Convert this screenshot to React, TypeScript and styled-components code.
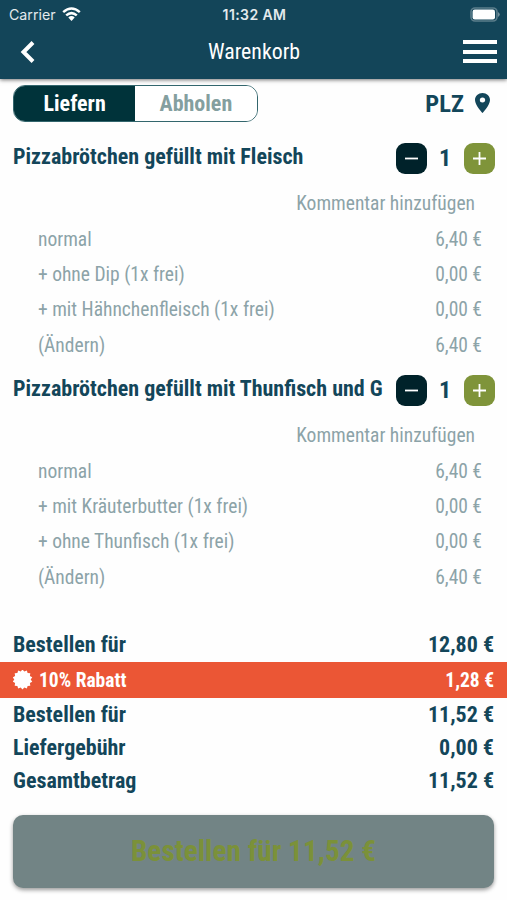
import React from 'react';
import styled, { createGlobalStyle } from 'styled-components';

const Global = createGlobalStyle`
  * { box-sizing: border-box; }
  body { margin: 0; background: #fff; }
`;

const Screen = styled.div`
  width: 507px;
  height: 900px;
  overflow: hidden;
  display: flex;
  flex-direction: column;
  background: #fefefe;
  color: #13465a;
  font-family: 'Roboto Condensed', Roboto, sans-serif;
  font-stretch: 75%;
  white-space: nowrap;
`;

const Header = styled.header`
  flex: none;
  height: 79px;
  background: #134559;
  color: #fff;
  box-shadow: 0 1px 4px rgba(0, 0, 0, 0.55);
`;

const StatusBar = styled.div`
  height: 27px;
  display: grid;
  grid-template-columns: 1fr auto 1fr;
  align-items: center;
  padding: 0 7px 0 9px;
  font: 400 14px/27px Inter, sans-serif;
  font-stretch: 100%;
  color: #e4eaed;
`;

const Carrier = styled.div`
  display: flex;
  align-items: center;
  gap: 6px;
  font-size: 14.2px;
`;

const Clock = styled.div`
  padding-top: 1px;
  font-weight: 600;
  font-size: 14px;
  letter-spacing: 0.4px;
`;

const BatterySlot = styled.div`
  display: flex;
  justify-content: flex-end;
`;

const NavBar = styled.div`
  height: 50px;
  display: grid;
  grid-template-columns: 1fr auto 1fr;
  align-items: center;
  padding: 0 10px 0 20px;
`;

const Title = styled.h1`
  margin: 0 9px 2px 0;
  font-size: 21.8px;
  font-weight: 400;
`;

const MenuButton = styled.div`
  justify-self: end;
  width: 34px;
  height: 23px;
  margin-bottom: 1px;
  display: flex;
  flex-direction: column;
  justify-content: space-between;
`;

const MenuLine = styled.span`
  height: 4px;
  background: #fff;
`;

const Toolbar = styled.div`
  flex: none;
  height: 60px;
  padding: 6px 17px 0 13px;
  display: flex;
  justify-content: space-between;
  align-items: flex-start;
`;

const Toggle = styled.div`
  display: flex;
  width: 244.5px;
  height: 37px;
  border: 1px solid #33666d;
  border-radius: 12px;
  overflow: hidden;
`;

const ToggleOption = styled.div<{ $active?: boolean }>`
  flex: 1;
  text-align: center;
  font-size: 22px;
  font-weight: 700;
  line-height: 35px;
  background: ${(p) => (p.$active ? '#00333a' : '#fff')};
  color: ${(p) => (p.$active ? '#fff' : '#849f9f')};
`;

const PostalCode = styled.div`
  display: flex;
  align-items: center;
  gap: 11px;
  height: 36px;
  font-size: 24.5px;
  font-weight: 700;
`;

const Item = styled.section`
  flex: none;
  height: 232px;
`;

const ItemHead = styled.div`
  height: 47px;
  padding: 4px 12px 0 13px;
  display: flex;
  align-items: flex-start;
`;

const ItemName = styled.div`
  width: 371px;
  margin-right: 12px;
  overflow: hidden;
  font-size: 22px;
  font-weight: 700;
  line-height: 27px;
`;

const Stepper = styled.div`
  flex: 1;
  height: 31px;
  display: flex;
  align-items: center;
  justify-content: space-between;
  font-size: 24px;
  font-weight: 700;
`;

const StepCount = styled.span`
  line-height: 31px;
  margin-right: 1px;
`;

const StepButton = styled.div<{ $plus?: boolean }>`
  width: 31px;
  height: 31px;
  border-radius: 9px;
  display: grid;
  place-items: center;
  background: ${(p) => (p.$plus ? '#7f943a' : '#00222a')};
`;

const DetailRow = styled.div<{ $comment?: boolean }>`
  height: 35.4px;
  padding: 0 ${(p) => (p.$comment ? 32 : 25)}px 0 38px;
  display: flex;
  align-items: center;
  justify-content: ${(p) => (p.$comment ? 'flex-end' : 'space-between')};
  font-size: 19.5px;
  color: #8ca3a8;
`;

const Totals = styled.section`
  flex: none;
  padding-top: 25px;
`;

const TotalRow = styled.div`
  height: 33px;
  padding: 0 13px;
  display: flex;
  align-items: center;
  justify-content: space-between;
  font-size: 22px;
  font-weight: 700;
`;

const DiscountRow = styled(TotalRow)`
  height: 36px;
  margin-top: 1px;
  background: #eb5635;
  color: #fff;
  font-size: 19.5px;
`;

const DiscountLabel = styled.div`
  display: flex;
  align-items: center;
  gap: 6px;
`;

const OrderButton = styled.div`
  flex: none;
  width: 481px;
  height: 73px;
  margin: 18px 13px 0;
  border-radius: 10px;
  background: #728485;
  box-shadow: 0 2px 4px rgba(0, 0, 0, 0.4);
  color: #7b9139;
  text-align: center;
  font-size: 29.3px;
  font-weight: 700;
  line-height: 72px;
`;

const burst = Array.from({ length: 28 }, (_, i) => {
  const r = i % 2 ? 8.2 : 10;
  const a = (i * Math.PI) / 14;
  return `${(10 + r * Math.sin(a)).toFixed(2)},${(10 - r * Math.cos(a)).toFixed(2)}`;
}).join(' ');

const items = [
  {
    name: 'Pizzabrötchen gefüllt mit Fleisch',
    rows: [
      ['normal', '6,40 €'],
      ['+ ohne Dip (1x frei)', '0,00 €'],
      ['+ mit Hähnchenfleisch (1x frei)', '0,00 €'],
      ['(Ändern)', '6,40 €'],
    ],
  },
  {
    name: 'Pizzabrötchen gefüllt mit Thunfisch und G',
    rows: [
      ['normal', '6,40 €'],
      ['+ mit Kräuterbutter (1x frei)', '0,00 €'],
      ['+ ohne Thunfisch (1x frei)', '0,00 €'],
      ['(Ändern)', '6,40 €'],
    ],
  },
];

const totals = [
  ['Bestellen für', '11,52 €'],
  ['Liefergebühr', '0,00 €'],
  ['Gesamtbetrag', '11,52 €'],
];

export default function App() {
  return (
    <Screen>
      <Global />
      <Header>
        <StatusBar>
          <Carrier>
            <span>Carrier</span>
            <svg width="19" height="14" viewBox="0 0 19 14" fill="none" stroke="#fff" strokeWidth="2.5">
              <path d="M1.2 5.1Q9.5-2.2 17.8 5.1M4.2 8.4Q9.5 3.8 14.8 8.4" />
              <path d="M6.3 10.5Q9.5 7.7 12.7 10.5L9.5 14Z" fill="#fff" stroke="none" />
            </svg>
          </Carrier>
          <Clock>11:32 AM</Clock>
          <BatterySlot>
            <svg width="30" height="15" viewBox="0 0 30 15">
              <rect x="1" y="1" width="26" height="13" rx="4" fill="none" stroke="#5b7d8b" strokeWidth="1.6" />
              <rect x="2.6" y="2.6" width="22.4" height="9.8" rx="2.2" fill="#fff" />
              <path d="M28 5Q31.6 7.5 28 10Z" fill="#718f9b" />
            </svg>
          </BatterySlot>
        </StatusBar>
        <NavBar>
          <svg width="15" height="22" viewBox="0 0 15 22" fill="none" stroke="#fff" strokeWidth="4">
            <path d="M13 1.5L3.5 11L13 20.5" />
          </svg>
          <Title>Warenkorb</Title>
          <MenuButton>
            <MenuLine />
            <MenuLine />
            <MenuLine />
          </MenuButton>
        </NavBar>
      </Header>
      <Toolbar>
        <Toggle>
          <ToggleOption $active>Liefern</ToggleOption>
          <ToggleOption>Abholen</ToggleOption>
        </Toggle>
        <PostalCode>
          PLZ
          <svg width="15" height="20" viewBox="5 2 14 20" preserveAspectRatio="none" fill="#13465a">
            <path d="M12 2C8.13 2 5 5.13 5 9c0 5.25 7 13 7 13s7-7.75 7-13c0-3.87-3.13-7-7-7zm0 9.5a2.5 2.5 0 1 1 0-5 2.5 2.5 0 0 1 0 5z" />
          </svg>
        </PostalCode>
      </Toolbar>
      {items.map((item) => (
        <Item key={item.name}>
          <ItemHead>
            <ItemName>{item.name}</ItemName>
            <Stepper>
              <StepButton>
                <svg width="15" height="15" stroke="#fff" strokeWidth="1.8">
                  <path d="M1 7.5H14" />
                </svg>
              </StepButton>
              <StepCount>1</StepCount>
              <StepButton $plus>
                <svg width="15" height="15" stroke="#fff" strokeWidth="1.8">
                  <path d="M1 7.5H14M7.5 1V14" />
                </svg>
              </StepButton>
            </Stepper>
          </ItemHead>
          <DetailRow $comment>Kommentar hinzufügen</DetailRow>
          {item.rows.map(([label, price]) => (
            <DetailRow key={label}>
              <span>{label}</span>
              <span>{price}</span>
            </DetailRow>
          ))}
        </Item>
      ))}
      <Totals>
        <TotalRow>
          <span>Bestellen für</span>
          <span>12,80 €</span>
        </TotalRow>
        <DiscountRow>
          <DiscountLabel>
            <svg width="20" height="20" viewBox="0.5 0.5 20 20" fill="#fff">
              <polygon points={burst} />
            </svg>
            10% Rabatt
          </DiscountLabel>
          <span>1,28 €</span>
        </DiscountRow>
        {totals.map(([label, price]) => (
          <TotalRow key={label}>
            <span>{label}</span>
            <span>{price}</span>
          </TotalRow>
        ))}
      </Totals>
      <OrderButton>Bestellen für 11,52 €</OrderButton>
    </Screen>
  );
}
